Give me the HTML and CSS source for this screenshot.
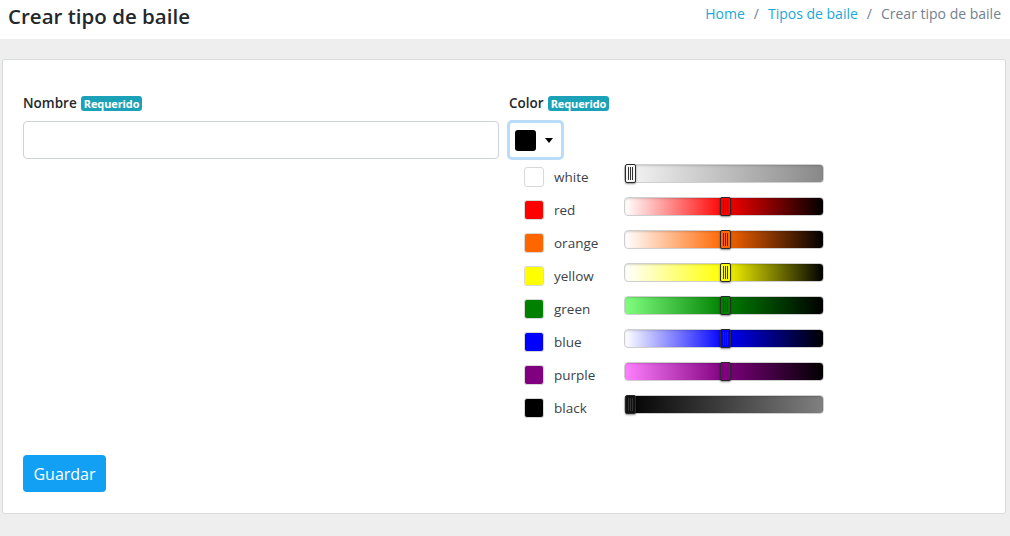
FILE: index.html
```html
<!DOCTYPE html>
<html lang="es">
<head>
<meta charset="utf-8">
<title>Crear tipo de baile</title>
<link rel="stylesheet" href="styles.css">
</head>
<body>
<header class="topbar">
  <h1 class="title">Crear tipo de baile</h1>
  <nav class="crumbs">
    <a class="crumb-link">Home</a><span class="sep">/</span><a class="crumb-link">Tipos de baile</a><span class="sep">/</span><span class="crumb-active">Crear tipo de baile</span>
  </nav>
</header>
<main class="content">
  <section class="card">
    <div class="form-row">
      <div class="field">
        <label class="label">Nombre <span class="badge">Requerido</span></label>
        <input class="input" type="text">
      </div>
      <div class="field">
        <label class="label">Color <span class="badge">Requerido</span></label>
        <div class="picker-btn">
          <span class="picker-swatch"></span>
          <span class="caret"></span>
        </div>
        <div class="palette">
          <div class="prow"><span class="sw sw-white"></span><span class="pname">white</span><div class="track tr-white"><span class="handle hd-white" style="left:0%"></span></div></div>
          <div class="prow"><span class="sw sw-red"></span><span class="pname">red</span><div class="track tr-red"><span class="handle hd-red" style="left:48%"></span></div></div>
          <div class="prow"><span class="sw sw-orange"></span><span class="pname">orange</span><div class="track tr-orange"><span class="handle hd-orange" style="left:48%"></span></div></div>
          <div class="prow"><span class="sw sw-yellow"></span><span class="pname">yellow</span><div class="track tr-yellow"><span class="handle hd-yellow" style="left:48%"></span></div></div>
          <div class="prow"><span class="sw sw-green"></span><span class="pname">green</span><div class="track tr-green"><span class="handle hd-green" style="left:48%"></span></div></div>
          <div class="prow"><span class="sw sw-blue"></span><span class="pname">blue</span><div class="track tr-blue"><span class="handle hd-blue" style="left:48%"></span></div></div>
          <div class="prow"><span class="sw sw-purple"></span><span class="pname">purple</span><div class="track tr-purple"><span class="handle hd-purple" style="left:48%"></span></div></div>
          <div class="prow"><span class="sw sw-black"></span><span class="pname">black</span><div class="track tr-black"><span class="handle hd-black" style="left:0%"></span></div></div>
        </div>
      </div>
    </div>
    <button class="btn" type="button">Guardar</button>
  </section>
</main>
</body>
</html>
```

FILE: styles.css
```css
* { box-sizing: border-box; }
html, body { margin: 0; padding: 0; }
body {
  font-family: "Open Sans", "Noto Sans", sans-serif;
  font-size: 14px;
  color: #23282c;
  background: #eeeeee;
  width: 1010px;
  height: 536px;
  overflow: hidden;
}
.topbar {
  height: 39px;
  background: #ffffff;
  display: flex;
  align-items: center;
  justify-content: space-between;
  padding: 0 9px 0 8px;
}
.title {
  margin: 0;
  font-size: 20.5px;
  font-weight: 600;
  color: #23282c;
  line-height: 1;
  margin-top: -6px;
}
.crumbs {
  font-size: 14px;
  margin-top: -12px;
  display: flex;
  align-items: center;
}
.crumb-link { color: #20a8d8; text-decoration: none; }
.crumb-active { color: #73818f; }
.sep { color: #73818f; padding: 0 9px; }
.content { padding: 20px 4px 0 2px; }
.card {
  background: #ffffff;
  border: 1px solid #d9dcde;
  border-radius: 3px;
  padding: 33px 20px 20px 20px;
  height: 455px;
}
.form-row {
  display: grid;
  grid-template-columns: 1fr 1fr;
  column-gap: 10px;
}
.field { display: flex; flex-direction: column; align-items: flex-start; }
.label {
  font-size: 13.5px;
  font-weight: 600;
  line-height: 21px;
  margin-bottom: 7px;
  display: flex;
  align-items: center;
  gap: 4px;
}
.badge {
  background: #1ba2b8;
  color: #ffffff;
  font-size: 11px;
  font-weight: 700;
  line-height: 15px;
  padding: 0 3px;
  border-radius: 3px;
  letter-spacing: -0.1px;
}
.input {
  width: 100%;
  height: 38px;
  border: 1px solid #ced4da;
  border-radius: 4px;
  background: #fff;
}
.picker-btn {
  width: 57px;
  height: 40px;
  margin-left: -2px;
  margin-top: -1px;
  border: 3px solid #b9dbfc;
  border-radius: 5px;
  display: flex;
  align-items: center;
  padding-left: 5px;
  gap: 9px;
}
.picker-swatch {
  width: 21px;
  height: 21px;
  background: #000;
  border-radius: 3px;
}
.caret {
  width: 0; height: 0;
  border-left: 4.5px solid transparent;
  border-right: 4.5px solid transparent;
  border-top: 5px solid #000;
}
.palette { padding-left: 15px; }
.prow {
  height: 33px;
  display: flex;
  align-items: center;
}
.sw {
  width: 20px; height: 20px;
  border-radius: 3px;
  border: 1px solid #d8d8d8;
  margin-right: 10px;
}
.sw-white { background: #ffffff; }
.sw-red { background: #ff0000; }
.sw-orange { background: #ff6600; }
.sw-yellow { background: #ffff00; }
.sw-green { background: #008000; }
.sw-blue { background: #0000ff; }
.sw-purple { background: #800080; }
.sw-black { background: #000000; }
.pname {
  width: 70px;
  color: #3c4248;
  font-size: 13.5px;
}
.track {
  position: relative;
  width: 200px;
  height: 19px;
  margin-bottom: 6px;
  border-radius: 4px;
  border: 1px solid #cfcfcf;
  box-shadow: inset 0 1px 2px rgba(0,0,0,0.15);
}
.tr-white { background: linear-gradient(to right, #f6f6f6, #888888); }
.tr-red { background: linear-gradient(to right, #ffffff, #ff0000 50%, #000000); }
.tr-orange { background: linear-gradient(to right, #ffffff, #ff6600 50%, #000000); }
.tr-yellow { background: linear-gradient(to right, #ffffff, #ffff00 50%, #000000); }
.tr-green { background: linear-gradient(to right, #80ff80, #008000 50%, #000000); }
.tr-blue { background: linear-gradient(to right, #ffffff, #0000ff 50%, #000000); }
.tr-purple { background: linear-gradient(to right, #ff80ff, #800080 50%, #000000); }
.tr-black { background: linear-gradient(to right, #000000, #808080); }
.handle {
  position: absolute;
  top: -1px;
  width: 11px;
  height: 19px;
  border: 1px solid #2a2a2a;
  border-radius: 2px;
  box-shadow: 0 1px 2px rgba(0,0,0,0.45);
  background-image:
    linear-gradient(#333, #333),
    linear-gradient(#333, #333),
    linear-gradient(#333, #333);
  background-size: 1px 13px;
  background-repeat: no-repeat;
  background-position: 2px 2px, 4px 2px, 6px 2px;
}
.hd-white { background-color: #f6f6f6; }
.hd-red { background-color: #ff0000; }
.hd-orange { background-color: #ff6600; }
.hd-yellow { background-color: #ffff00; }
.hd-green { background-color: #008000; }
.hd-blue { background-color: #0000ff; }
.hd-purple { background-color: #800080; }
.hd-black { background-color: #111111; }
.btn {
  margin-top: 31px;
  font-family: inherit;
  font-size: 16px;
  color: #ffffff;
  background: #12a0f5;
  border: none;
  border-radius: 4px;
  width: 83px;
  height: 37px;
  padding: 0;
}
```
